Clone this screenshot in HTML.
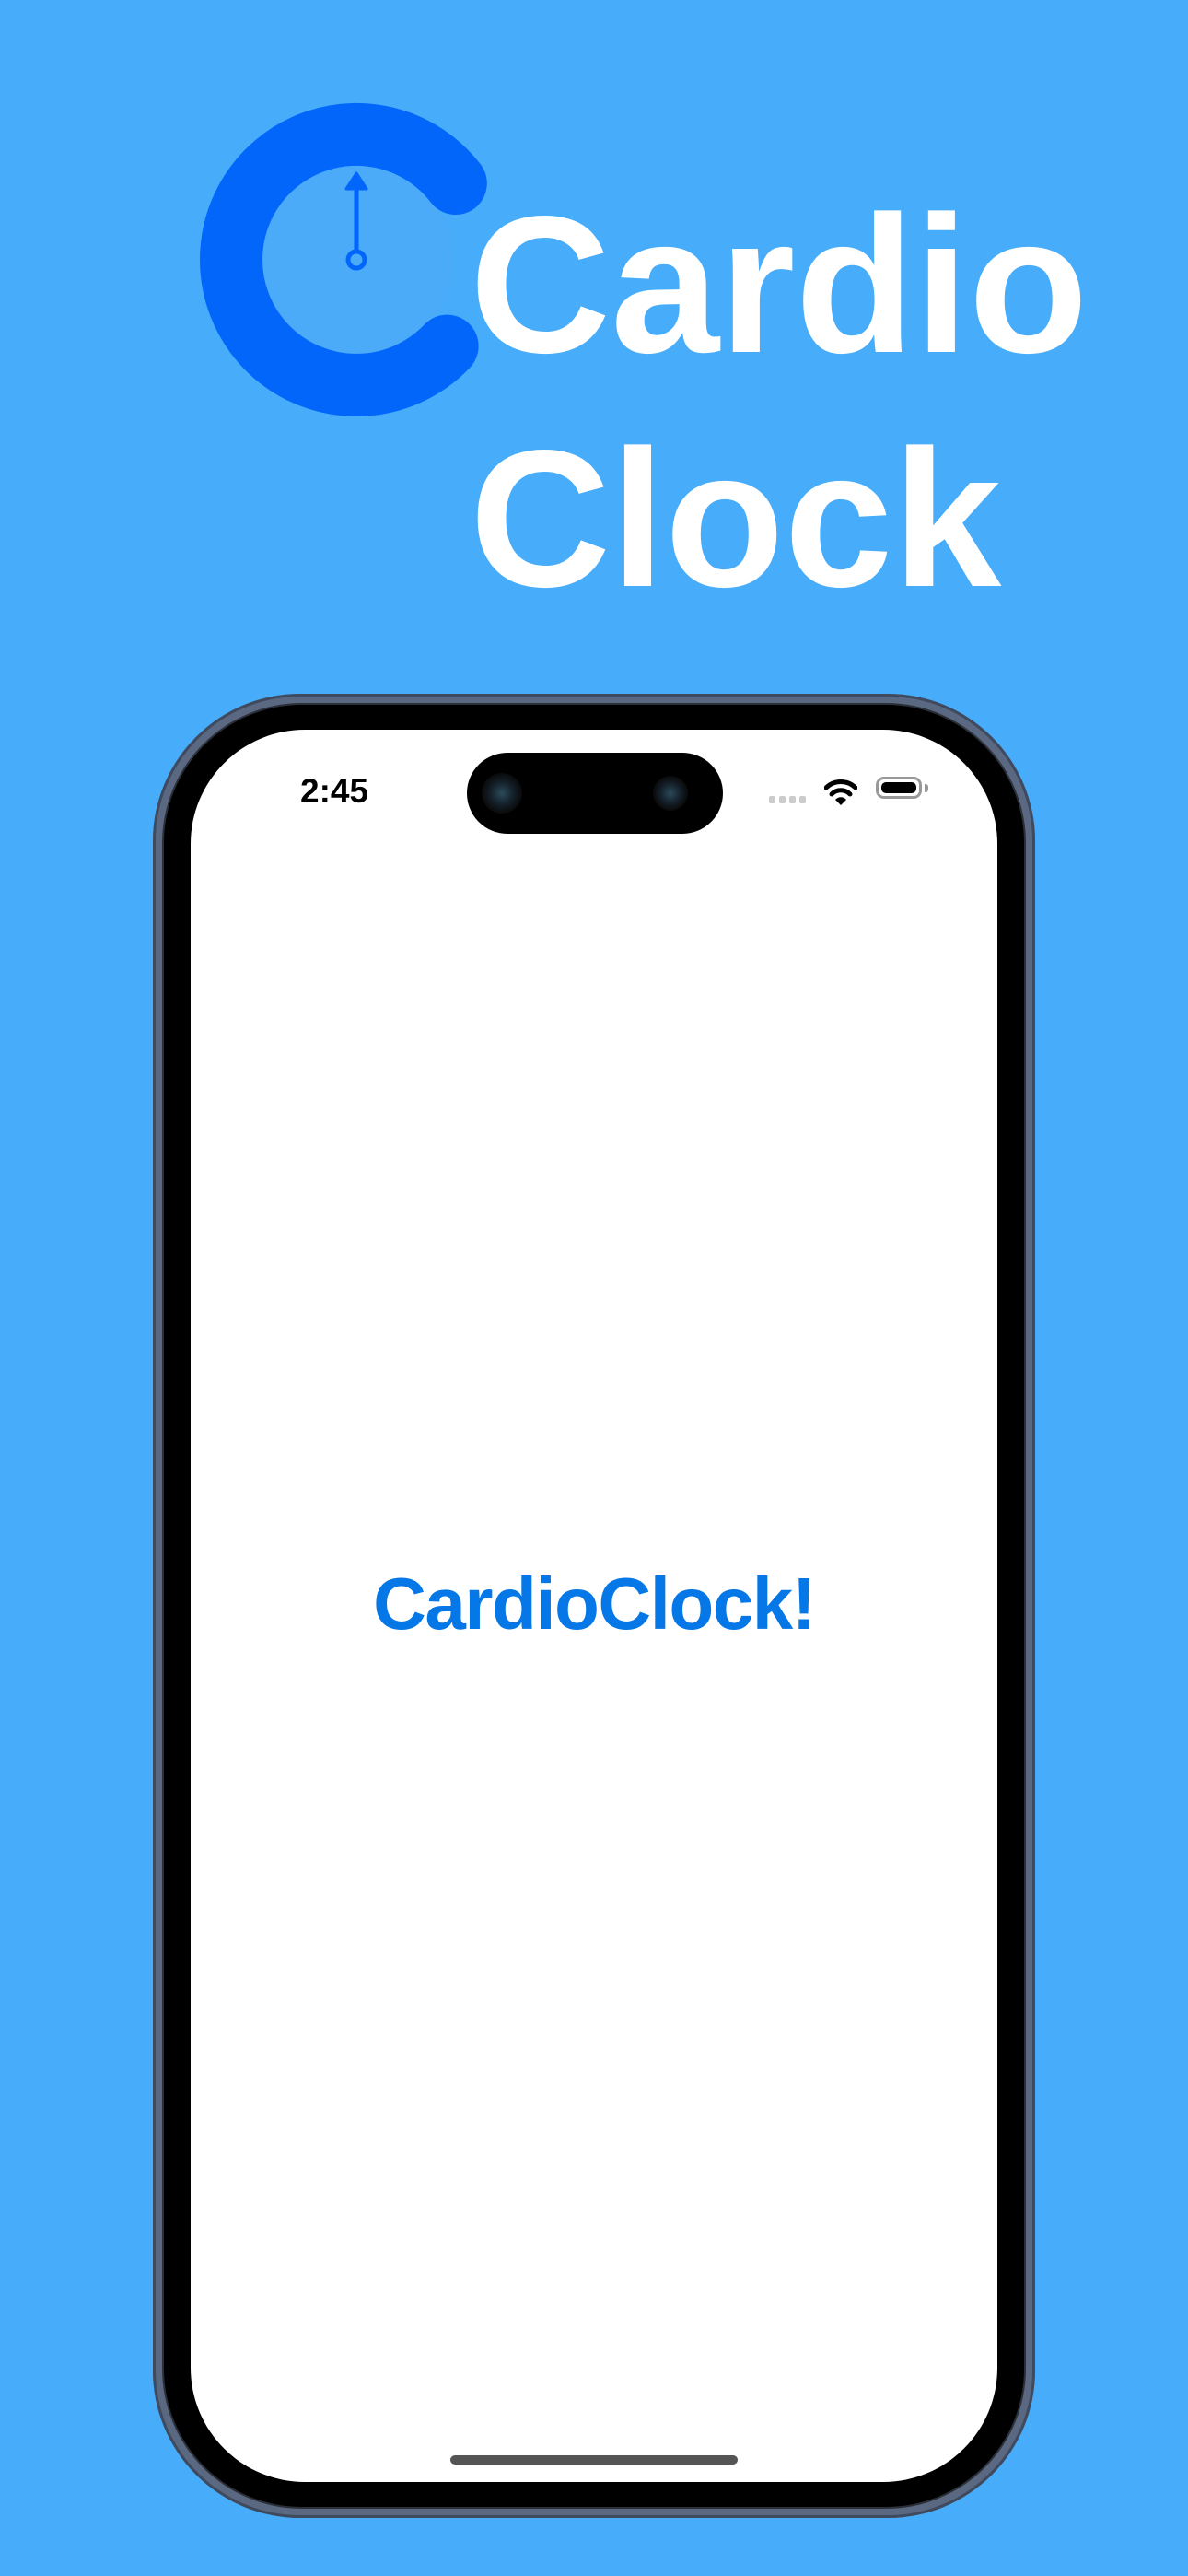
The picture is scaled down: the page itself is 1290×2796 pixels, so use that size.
<!DOCTYPE html>
<html><head><meta charset="utf-8"><style>
html,body{margin:0;padding:0}
body{width:1290px;height:2796px;background:#47acf9;position:relative;overflow:hidden;font-family:"Liberation Sans",sans-serif}
.t{position:absolute;color:#fff;font-weight:bold;font-size:212px;line-height:1;letter-spacing:0px}
.frame{position:absolute;left:166px;top:753px;width:958px;height:1980px;border-radius:160px;background:#5a6882;box-shadow:inset 0 0 0 3px #3f4a5e}
.bezel{position:absolute;left:178px;top:765px;width:934px;height:1956px;border-radius:150px;background:#000;box-shadow:0 0 0 2px #2a2f38}
.screen{position:absolute;left:207px;top:792px;width:876px;height:1902px;border-radius:124px;background:#fff;overflow:hidden}
.island{position:absolute;left:300px;top:25px;width:278px;height:88px;border-radius:44px;background:#000}
.cam{position:absolute;top:22px;width:44px;height:44px;border-radius:50%;background:radial-gradient(circle,#2b4a5a 0,#14202a 40%,#0a0a0a 70%)}
</style></head><body>
<svg style="position:absolute;left:0;top:0" width="700" height="500">
<circle cx="387" cy="282" r="105" fill="#4fa9fa" opacity="0.5"/>
<path d="M494.8 199 A136 136 0 1 0 485.6 375.6" fill="none" stroke="#0366fb" stroke-width="68" stroke-linecap="round"/>
<line x1="387" y1="272" x2="387" y2="200" stroke="#0366fb" stroke-width="5"/>
<path d="M387 188 L398 205 L376 205 Z" fill="#0366fb" stroke="#0366fb" stroke-width="3" stroke-linejoin="round"/>
<circle cx="387" cy="282" r="9" fill="none" stroke="#0366fb" stroke-width="5"/>
</svg>
<div class="t" style="left:510px;top:203px">Cardio</div>
<div class="t" style="left:510px;top:457px">Clock</div>
<div class="frame"></div>
<div class="bezel"></div>
<div class="screen">
 <div style="position:absolute;left:119px;top:46px;font-size:37px;font-weight:bold;color:#000">2:45</div>
 <div class="island"><div class="cam" style="left:16px"></div><div class="cam" style="left:202px;width:38px;height:38px;top:25px"></div></div>
 <div style="position:absolute;left:628px;top:72px;width:44px;height:8px">
  <span style="position:absolute;left:0;width:7px;height:8px;border-radius:2px;background:#ccc"></span>
  <span style="position:absolute;left:11px;width:7px;height:8px;border-radius:2px;background:#ccc"></span>
  <span style="position:absolute;left:22px;width:7px;height:8px;border-radius:2px;background:#ccc"></span>
  <span style="position:absolute;left:33px;width:7px;height:8px;border-radius:2px;background:#ccc"></span>
 </div>
 <svg style="position:absolute;left:688px;top:52px" width="36" height="32" viewBox="0 0 36 32">
  <path d="M2 11 A23 23 0 0 1 34 11" fill="none" stroke="#000" stroke-width="5" stroke-linecap="round"/>
  <path d="M8 18 A14 14 0 0 1 28 18" fill="none" stroke="#000" stroke-width="5" stroke-linecap="round"/>
  <path d="M12 24 L18 30 L24 24 A8 8 0 0 0 12 24Z" fill="#000"/>
 </svg>
 <div style="position:absolute;left:744px;top:51px;width:50px;height:24px;border:3px solid #999;border-radius:9px;box-sizing:border-box;padding:3px"><div style="width:100%;height:100%;background:#000;border-radius:5px"></div></div>
 <div style="position:absolute;left:797px;top:59px;width:4px;height:9px;background:#999;border-radius:0 3px 3px 0"></div>
 <div style="position:absolute;left:0;width:876px;top:909px;text-align:center;font-size:80px;font-weight:bold;color:#0577e6;letter-spacing:-1.5px;line-height:1">CardioClock!</div>
 <div style="position:absolute;left:282px;top:1873px;width:312px;height:10px;border-radius:5px;background:#555"></div>
</div>
</body></html>
